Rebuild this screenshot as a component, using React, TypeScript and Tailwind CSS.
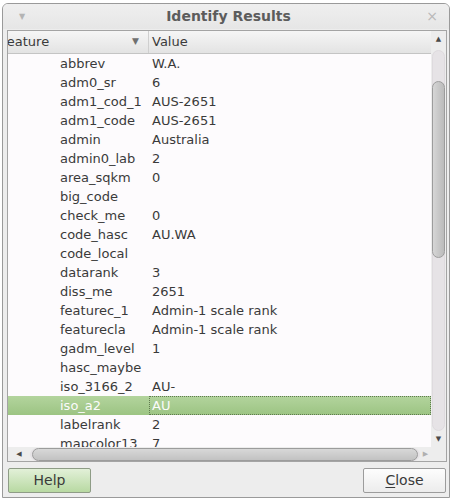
import React from "react";

const rows: [string, string][] = [
  ["abbrev", "W.A."],
  ["adm0_sr", "6"],
  ["adm1_cod_1", "AUS-2651"],
  ["adm1_code", "AUS-2651"],
  ["admin", "Australia"],
  ["admin0_lab", "2"],
  ["area_sqkm", "0"],
  ["big_code", ""],
  ["check_me", "0"],
  ["code_hasc", "AU.WA"],
  ["code_local", ""],
  ["datarank", "3"],
  ["diss_me", "2651"],
  ["featurec_1", "Admin-1 scale rank"],
  ["featurecla", "Admin-1 scale rank"],
  ["gadm_level", "1"],
  ["hasc_maybe", ""],
  ["iso_3166_2", "AU-"],
  ["iso_a2", "AU"],
  ["labelrank", "2"],
  ["mapcolor13", "7"],
];

const SELECTED = "iso_a2";

function Row({ name, value }: { name: string; value: string }) {
  const sel = name === SELECTED;
  return (
    <div
      className={
        "flex h-[19px] shrink-0 items-center " +
        (sel ? "bg-gradient-to-b from-[#b3d49d] to-[#9cc483] text-[#fbfbfb]" : "text-[#3a3a3a]")
      }
    >
      <div className="w-[141px] shrink-0 pl-[52px] whitespace-nowrap overflow-hidden">{name}</div>
      <div
        className={
          "flex-1 h-full flex items-center whitespace-nowrap " +
          (sel ? "border border-dotted border-[#5f7a4f] pl-[2px]" : "pl-[3px]")
        }
      >
        {value}
      </div>
    </div>
  );
}

export default function App() {
  return (
    <div
      className="w-[452px] h-[500px] bg-white pt-[3px] pl-[2px] pr-[2px] pb-[2px] flex"
      style={{ fontFamily: '"DejaVu Sans", "Liberation Sans", sans-serif' }}
    >
      <div className="flex-1 flex flex-col border border-[#9a9a9a] rounded-t-[6px] bg-[#ededed] overflow-hidden">
        {/* Title bar */}
        <div className="h-[25px] shrink-0 flex items-center pl-[16px] pr-[11px] bg-gradient-to-b from-[#efefef] to-[#e6e6e6]">
          <span className="text-[8px] text-[#b4b4b4] w-[20px]">▼</span>
          <span className="flex-1 text-center text-[14px] font-bold text-[#5c5c5c]">Identify Results</span>
          <span className="text-[14px] text-[#b8b8b8] w-[20px] text-right">×</span>
        </div>

        {/* Table */}
        <div className="mt-[1px] ml-[4px] mr-[2px] h-[432px] shrink-0 flex flex-col border border-[#a4a4a4] bg-[#ededed]">
          <div className="flex flex-1 min-h-0">
            <div className="flex-1 flex flex-col min-w-0 text-[13px]">
              {/* Header */}
              <div className="h-[23px] shrink-0 flex items-center bg-gradient-to-b from-[#f6f6f6] to-[#e3e3e3] border-b border-[#c4c4c4] text-[#3a3a3a]">
                <div className="w-[141px] shrink-0 h-full flex items-center overflow-hidden border-r border-[#cfcfcf]">
                  <span className="ml-[-8px] flex-1 whitespace-nowrap">Feature</span>
                  <span className="text-[9px] text-[#707070] mr-[9px]">▼</span>
                </div>
                <div className="flex-1 pl-[3px]">Value</div>
              </div>
              {/* Body */}
              <div className="flex-1 min-h-0 overflow-hidden bg-[#fdfbfd]">
                {rows.map(([n, v]) => (
                  <Row key={n} name={n} value={v} />
                ))}
              </div>
            </div>
            {/* Vertical scrollbar */}
            <div className="w-[15px] shrink-0 flex flex-col items-center bg-[#ededed] pt-[4px] pb-[4px]">
              <span className="text-[7px] leading-[8px] text-[#4a4a4a] h-[10px]">▲</span>
              <div className="mt-[5px] w-[13px] flex-1 rounded-full bg-[#e6e3e6] border border-[#dedade] flex flex-col">
                <div className="h-[30px] shrink-0" />
                <div className="h-[177px] shrink-0 rounded-full border border-[#9c9c9c] bg-gradient-to-r from-[#d6d6d6] via-[#c8c8c8] to-[#bcbcbc] mx-[-1px]" />
              </div>
              <span className="mt-[4px] text-[7px] leading-[8px] text-[#4a4a4a]">▼</span>
            </div>
          </div>
          {/* Horizontal scrollbar */}
          <div className="h-[14px] shrink-0 flex items-center bg-[#ededed]">
            <span className="w-[22px] text-center text-[7px] text-[#4a4a4a]">◀</span>
            <div className="flex-1 h-[13px] rounded-full bg-[#e6e3e6] flex items-center">
              <div className="flex-1 h-[13px] ml-[2px] mr-[2px] rounded-full border border-[#9c9c9c] bg-gradient-to-b from-[#d8d8d8] to-[#c2c2c2]" />
            </div>
            <span className="w-[11px] text-center text-[7px] text-[#b0b0b0]">▶</span>
            <div className="w-[15px] shrink-0" />
          </div>
        </div>

        {/* Buttons */}
        <div className="mt-[6px] pl-[5px] pr-[3px] flex justify-between">
          <button className="w-[83px] h-[25px] rounded-[2px] border border-[#8e9c86] bg-gradient-to-b from-[#e2f0d8] to-[#b8d9a2] text-[14px] text-[#3a3a3a]">
            Help
          </button>
          <button className="w-[83px] h-[25px] rounded-[2px] border border-[#9c9c9c] bg-gradient-to-b from-[#fdfdfd] to-[#ececec] text-[14px] text-[#3a3a3a]">
            <span className="underline underline-offset-2">C</span>lose
          </button>
        </div>
      </div>
    </div>
  );
}
